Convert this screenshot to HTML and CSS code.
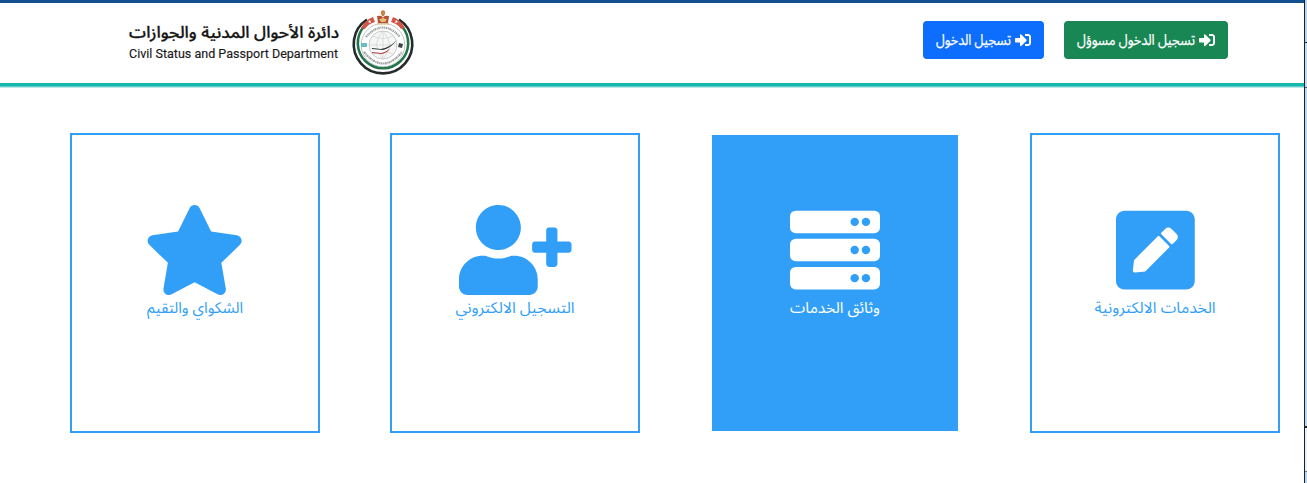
FILE: index.html
```html
<!DOCTYPE html>
<html lang="ar">
<head>
<meta charset="utf-8">
<title>دائرة الأحوال المدنية والجوازات</title>
<link rel="stylesheet" href="styles.css">
</head>
<body>
<div class="window">
  <div class="page">
    <header class="header">
      <div class="brand">
        <svg class="brand-name" width="212" height="46" viewBox="0 0 212 46">
          <text class="brand-ar" x="106" y="19" text-anchor="middle" textLength="210" lengthAdjust="spacingAndGlyphs">دائرة الأحوال المدنية والجوازات</text>
          <text class="brand-en" x="1" y="39" textLength="209" lengthAdjust="spacingAndGlyphs">Civil Status and Passport Department</text>
        </svg>
        <svg class="emblem" width="62" height="66" viewBox="0 0 62 66">
          <g fill="none">
            <path d="M15 9.5A29.3 29.3 0 1 0 47 9.5" stroke="#252b2c" stroke-width="2.6"/>
            <path d="M12 16.5A25.2 25.2 0 1 0 50 16.5" stroke="#23744a" stroke-width="2.6"/>
            <circle cx="31" cy="35" r="21.8" stroke="#a9aeae" stroke-width=".7"/>
            <circle cx="31" cy="35" r="14" fill="#f5f6f6" stroke="#bbb" stroke-width=".8"/>
            <path d="M17 35h28M31 21v28M21 26q10 5 20 0M21 44q10-5 20 0M31 21q-13 14 0 28M31 21q13 14 0 28" stroke="#d0d3d3" stroke-width=".7"/>
          </g>
          <path d="M9 18q4-8 12-11l2 5q-7 2-10 7zM53 18q-4-8-12-11l-2 5q7 2 10 7z" fill="#d05648"/>
          <path d="M16 12l2-2 1 3zM46 12l-2-2-1 3z" fill="#fff"/>
          <path d="M25 6q3-1 6 1 3-2 6-1l-1 7H26z" fill="#b84e35"/>
          <path d="M29 4q-1-3 2-4 3 1 2 4l-1 2h-2z" fill="#c98343"/>
          <path d="M27 9h2l2-2 2 2h2l-2 3h-4z" fill="#e2c077"/>
          <path d="M25 14h12" stroke="#d5b56d"/>
          <path d="M20 38l10 1q7-1 15-9-4 9-14 13l-11-1z" fill="#fff"/>
          <path d="M20 38l9 1q8-1 16-9-6 8-14 10l-11-1z" fill="#28322f"/>
          <path d="M20 42l9 1q6-1 10-6-4 7-10 7l-9-1z" fill="#bb3e3e"/>
          <path d="M9 33h6v4H9z" fill="#69bcc4"/>
          <path d="M47 33l4 1-1 4-4-1z" fill="#3b4542"/>
          <g fill="none" stroke="#68716e" stroke-width="2.2" opacity=".65">
            <path d="M14 27q17-19 34 0" stroke-dasharray="1.5 .7 1 .6"/>
            <path d="M12 42q19 23 38 0" stroke-dasharray="2 .6 1 .5"/>
          </g>
        </svg>
      </div>
      <nav class="actions">
        <button class="btn btn-primary">
          <svg width="75" height="24"><text x="37.5" y="17" text-anchor="middle" textLength="75" lengthAdjust="spacingAndGlyphs">تسجيل الدخول</text></svg>
          <svg class="sign-in" viewBox="0 0 512 512"><path d="M416 448h-84c-6.6 0-12-5.4-12-12v-40c0-6.6 5.4-12 12-12h84c17.7 0 32-14.3 32-32V160c0-17.7-14.3-32-32-32h-84c-6.6 0-12-5.4-12-12V76c0-6.6 5.4-12 12-12h84c53 0 96 43 96 96v192c0 53-43 96-96 96zm-47-201L201 79c-15-15-41-4.5-41 17v96H24c-13.3 0-24 10.7-24 24v96c0 13.3 10.7 24 24 24h136v96c0 21.5 26 32 41 17l168-168c9.3-9.4 9.3-24.6 0-34z"/></svg>
        </button>
        <button class="btn btn-success">
          <svg width="118" height="24"><text x="59" y="17" text-anchor="middle" textLength="118" lengthAdjust="spacingAndGlyphs">تسجيل الدخول مسوؤل</text></svg>
          <svg class="sign-in" viewBox="0 0 512 512"><path d="M416 448h-84c-6.6 0-12-5.4-12-12v-40c0-6.6 5.4-12 12-12h84c17.7 0 32-14.3 32-32V160c0-17.7-14.3-32-32-32h-84c-6.6 0-12-5.4-12-12V76c0-6.6 5.4-12 12-12h84c53 0 96 43 96 96v192c0 53-43 96-96 96zm-47-201L201 79c-15-15-41-4.5-41 17v96H24c-13.3 0-24 10.7-24 24v96c0 13.3 10.7 24 24 24h136v96c0 21.5 26 32 41 17l168-168c9.3-9.4 9.3-24.6 0-34z"/></svg>
        </button>
      </nav>
    </header>
    <main class="cards">
      <a class="card">
        <svg class="icon" viewBox="0 0 576 512"><path d="M259.3 17.8L194 150.2 47.9 171.5c-26.2 3.8-36.7 36.1-17.7 54.6l105.7 103-25 145.5c-4.5 26.3 23.2 46 46.4 33.7L288 439.6l130.7 68.7c23.2 12.2 50.9-7.4 46.4-33.7l-25-145.5 105.7-103c19-18.5 8.5-50.8-17.7-54.6L382 150.2 316.7 17.8c-11.7-23.6-45.6-23.9-57.4 0z"/></svg>
        <svg class="label" width="130" height="26"><text x="65" y="18" text-anchor="middle" textLength="96" lengthAdjust="spacingAndGlyphs">الشكواي والتقيم</text></svg>
      </a>
      <a class="card">
        <svg class="icon" viewBox="0 0 640 512"><path d="M624 208h-64v-64c0-8.8-7.2-16-16-16h-32c-8.8 0-16 7.2-16 16v64h-64c-8.8 0-16 7.2-16 16v32c0 8.8 7.2 16 16 16h64v64c0 8.8 7.2 16 16 16h32c8.8 0 16-7.2 16-16v-64h64c8.8 0 16-7.2 16-16v-32c0-8.8-7.2-16-16-16zm-400 48c70.7 0 128-57.3 128-128S294.7 0 224 0 96 57.3 96 128s57.3 128 128 128zm89.6 32h-16.7c-22.2 10.2-46.9 16-72.9 16s-50.6-5.8-72.9-16h-16.7C60.2 288 0 348.2 0 422.4V464c0 26.5 21.5 48 48 48h352c26.5 0 48-21.5 48-48v-41.6c0-74.2-60.2-134.4-134.4-134.4z"/></svg>
        <svg class="label" width="130" height="26"><text x="65" y="18" text-anchor="middle" textLength="119" lengthAdjust="spacingAndGlyphs">التسجيل الالكتروني</text></svg>
      </a>
      <a class="card card-active">
        <svg class="icon" viewBox="0 0 512 512">
          <rect y="32" width="512" height="128" rx="32"/>
          <rect y="192" width="512" height="128" rx="32"/>
          <rect y="352" width="512" height="128" rx="32"/>
          <g class="lights"><circle cx="368" cy="96" r="24"/><circle cx="432" cy="96" r="24"/><circle cx="368" cy="256" r="24"/><circle cx="432" cy="256" r="24"/><circle cx="368" cy="416" r="24"/><circle cx="432" cy="416" r="24"/></g>
        </svg>
        <svg class="label" width="130" height="26"><text x="65" y="18" text-anchor="middle" textLength="90" lengthAdjust="spacingAndGlyphs">وثائق الخدمات</text></svg>
      </a>
      <a class="card">
        <svg class="icon" viewBox="0 0 448 512"><path d="M400 480H48c-26.5 0-48-21.5-48-48V80c0-26.5 21.5-48 48-48h352c26.5 0 48 21.5 48 48v352c0 26.5-21.5 48-48 48zM238.1 177.9L102.4 313.6l-6.3 57.1c-.8 7.6 5.6 14.1 13.3 13.3l57.1-6.3L302.2 242c2.3-2.3 2.3-6.1 0-8.5L246.7 178c-2.5-2.4-6.3-2.4-8.6-.1zM345 165.1L314.9 135c-9.4-9.4-24.6-9.4-33.9 0l-23.1 23.1c-2.3 2.3-2.3 6.1 0 8.5l55.5 55.5c2.3 2.3 6.1 2.3 8.5 0L345 199c9.3-9.3 9.3-24.5 0-33.9z"/></svg>
        <svg class="label" width="130" height="26"><text x="65" y="18" text-anchor="middle" textLength="121" lengthAdjust="spacingAndGlyphs">الخدمات الالكترونية</text></svg>
      </a>
    </main>
  </div>
  <div class="window-edge"></div>
</div>
</body>
</html>
```
FILE: styles.css
```css
* { box-sizing: border-box; }
body {
  margin: 0;
  background: #fff;
  font-family: "Noto Sans Arabic", "DejaVu Sans", sans-serif;
  overflow: hidden;
}
svg { display: block; flex: none; overflow: visible; }
text { fill: currentColor; }
.window { display: flex; height: 483px; }
.page { width: 1304px; flex: none; border-top: 3px solid #124f91; }
.window-edge {
  width: 3px;
  border-left: 1px solid #17202b;
  background: linear-gradient(#b9d5ef 0 42px, #243447 42px 43px, #c3dcf4 43px 87px, #4b6680 87px 88px, #bad9f5 88px 426px, #222 426px 428px, #e5f0fa 428px 471px, #718393 471px 472px, #b8d8f4 472px);
}
.header {
  display: flex;
  justify-content: space-between;
  height: 80px;
  padding: 0 76px 0 128px;
  box-shadow: 0 3px 0 #16b8b0, 0 4px 0 #5accc6, 0 5px 0 #bdebe8;
  background: #fff;
}
.brand { display: flex; gap: 12px; padding-top: 7px; }
.brand-name { margin-top: 9px; }
.brand-ar { font-size: 16px; font-weight: 500; fill: #151515; stroke: #151515; stroke-width: .3px; }
.brand-en { font-family: Roboto, sans-serif; font-size: 12px; font-weight: 400; fill: #1a1a1a; stroke: #1a1a1a; stroke-width: .15px; }
.actions { display: flex; align-items: flex-start; gap: 20px; padding-top: 18px; }
.btn {
  display: flex;
  align-items: center;
  gap: 4px;
  height: 38px;
  padding: 0 13px;
  border: 0;
  border-radius: 4px;
  color: #fff;
  font: 15px "Noto Sans Arabic", "DejaVu Sans", sans-serif;
}
.btn text { stroke: currentColor; stroke-width: .25px; }
.btn-primary { background: #0d6efd; }
.btn-success { background: #198754; }
.sign-in { width: 16px; height: 16px; fill: currentColor; }
.cards { display: flex; gap: 70px; padding: 50px 0 0 70px; }
.card {
  display: flex;
  flex-direction: column;
  align-items: center;
  width: 250px;
  height: 300px;
  padding-top: 70px;
  border: 2px solid #319ff7;
  color: #319ff7;
  font-size: 15.5px;
}
.card-active {
  border-color: #fff;
  background: #319ff7;
  background-clip: padding-box;
  color: #fff;
}
.icon { height: 90px; fill: currentColor; }
.lights { fill: #319ff7; }
```
